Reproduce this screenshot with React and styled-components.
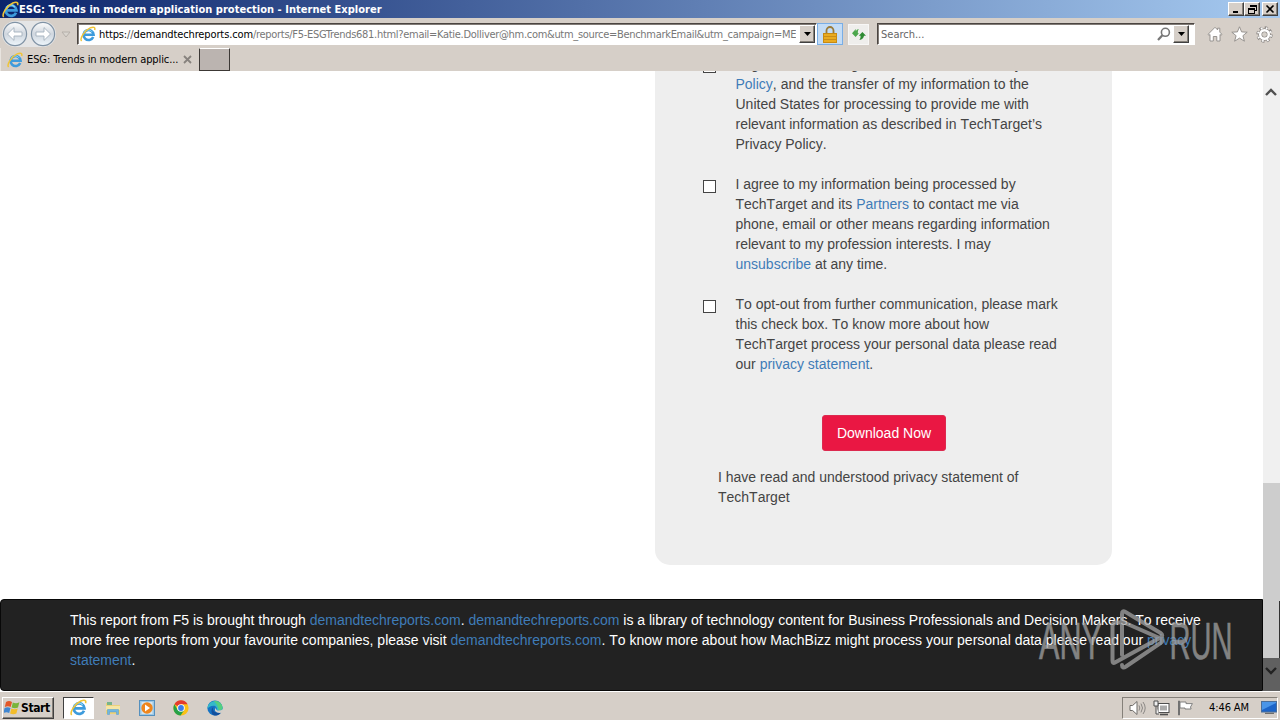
import React from 'react'
import styled, { createGlobalStyle } from 'styled-components'

function IeIcon({ size = 17 }) {
  return (
    <Svg width={size} height={size} viewBox="0 0 16 16">
      <path d="M13.2 11 A5 5 0 1 1 13.6 8.8 H4.8" fill="none" stroke="#3d9bdc" strokeWidth="2.6" />
      <path d="M12 5.8 A4.7 4.7 0 0 0 4 6.4" fill="none" stroke="#8fd8f7" strokeWidth="1" />
      <path d="M1.6 15 C-0.6 12.6 4.4 4.6 10.2 1.9 C13.6 0.4 15.6 1.2 14.6 4" fill="none" stroke="#f0c437" strokeWidth="1.5" />
    </Svg>
  )
}

function NavArrow({ flip }) {
  return (
    <Svg width="26" height="26" viewBox="0 0 26 26">
      <defs>
        <linearGradient id="orb" x1="0" y1="0" x2="0" y2="1">
          <stop offset="0" stopColor="#fdfdfd" />
          <stop offset="0.5" stopColor="#cfd6de" />
          <stop offset="1" stopColor="#eef6fb" />
        </linearGradient>
      </defs>
      <circle cx="13" cy="13" r="11.6" fill="url(#orb)" stroke="#8093a5" strokeWidth="1.2" />
      <path
        d="M5.5 13 L12 6.6 V11 H20 V15 H12 V19.4 Z"
        transform={flip ? 'translate(26 0) scale(-1 1)' : undefined}
        fill="#fff" stroke="#a4b1bd" strokeWidth="0.9"
      />
    </Svg>
  )
}

function App() {
  return (
    <Screen>
      <GlobalStyle />
      <TitleBar>
        <IeIcon />
        <Title>ESG: Trends in modern application protection - Internet Explorer</Title>
        <WindowButtons>
          <WinButton><svg width="12" height="10"><path d="M3 8h5" stroke="#000" strokeWidth="2" /></svg></WinButton>
          <WinButton>
            <svg width="12" height="10" shapeRendering="crispEdges">
              <path d="M4 1h6v5h-2M4 1v2M4 2h6M2 4h6v5h-6zM2 5h6" fill="none" stroke="#000" />
            </svg>
          </WinButton>
          <WinButton $gap><svg width="12" height="10"><path d="M2.5 1.5l7 7M9.5 1.5l-7 7" stroke="#000" strokeWidth="1.6" /></svg></WinButton>
        </WindowButtons>
      </TitleBar>

      <NavBar>
        <NavPair><NavArrow /><NavArrow flip /></NavPair>
        <HistoryArrow width="10" height="7"><path d="M1 1h8l-4 5z" fill="#d9d5cf" stroke="#b6b0aa" /></HistoryArrow>
        <AddressBox>
          <IeIcon size={16} />
          <Url><b>https:</b>//<b>demandtechreports.com</b><UrlRest>/reports/F5-ESGTrends681.html?email=Katie.Dolliver@hm.com&amp;utm_source=BenchmarkEmail&amp;utm_campaign=ME</UrlRest></Url>
          <DropButton><svg width="7" height="4"><path d="M0 0h7l-3.5 4z" /></svg></DropButton>
        </AddressBox>
        <LockButton>
          <svg width="14" height="17" viewBox="0 0 14 17">
            <path d="M3.5 8V4.5a3.5 3.5 0 0 1 7 0V8" fill="none" stroke="#9a7b3a" strokeWidth="1.8" />
            <rect x="0.5" y="7.5" width="13" height="9" fill="#e9ab20" stroke="#c78a12" />
            <path d="M1 10.5h12M1 13.5h12" stroke="#c98d18" />
          </svg>
        </LockButton>
        <RefreshButton>
          <svg width="14" height="13" viewBox="0 0 14 13">
            <path d="M0 5.2L3.8 1V3.2Q4.4 1.6 6.8 1Q5.6 2.4 5.8 5.2L7 5.2L3.6 9L0 5.2Z" fill="#4ba64b" />
            <path d="M14 7.8L10.4 4L6.8 7.8H8.6Q8.8 10.6 7.4 12Q11.6 11.4 12 7.8Z" fill="#2e8b33" />
          </svg>
        </RefreshButton>
        <SearchBox>
          <span>Search...</span>
          <svg width="14" height="14"><circle cx="8.4" cy="5.3" r="4" fill="none" stroke="#777" strokeWidth="1.6" /><path d="M5.4 8.2L1 13" stroke="#777" strokeWidth="2.2" /></svg>
          <DropButton><svg width="7" height="4"><path d="M0 0h7l-3.5 4z" /></svg></DropButton>
        </SearchBox>
        <Tools>
          <svg width="16" height="16" viewBox="0 0 16 16"><path d="M1 8.4L8 1.3l2.6 2.6V2.2h2.2v3.9L15 8.4l-1 .9-1-.8V15H9.8v-4.5H6.3V15H3V8.5l-1 .8z" fill="#fff" stroke="#8f8b88" strokeWidth=".9" /></svg>
          <svg width="17" height="16" viewBox="0 0 17 16"><path d="M8.5 .8l2.1 5.1 5.6.3-4.3 3.5 1.5 5.5-4.9-3.1-4.9 3.1 1.5-5.5L.8 6.2l5.6-.3z" fill="#fff" stroke="#8f8b88" strokeWidth=".9" /></svg>
          <svg width="17" height="17" viewBox="0 0 17 17">
            <circle cx="8.5" cy="8.5" r="6.7" fill="none" stroke="#8f8b88" strokeWidth="3" strokeDasharray="3 2.262" />
            <circle cx="8.5" cy="8.5" r="4.3" fill="none" stroke="#8f8b88" strokeWidth="4" />
            <circle cx="8.5" cy="8.5" r="6.5" fill="none" stroke="#fff" strokeWidth="2" strokeDasharray="1.6 3.505" strokeDashoffset="-.65" />
            <circle cx="8.5" cy="8.5" r="4.3" fill="none" stroke="#fff" strokeWidth="2.5" />
            <circle cx="8.5" cy="8.5" r="2" fill="#d4cfc8" />
          </svg>
        </Tools>
      </NavBar>

      <TabBar>
        <Tab>
          <IeIcon size={16} />
          <TabLabel>ESG: Trends in modern applic...</TabLabel>
          <svg width="9" height="9"><path d="M1 1l7 7M8 1l-7 7" stroke="#87827e" strokeWidth="1.8" /></svg>
        </Tab>
        <NewTab />
      </TabBar>

      <Viewport>
        <Page>
          <FormCard>
            <Consent>
              <Checkbox />
              <p>I agree to TechTarget’s Terms of Use, Privacy<br /><a>Policy</a>, and the transfer of my information to the<br />United States for processing to provide me with<br />relevant information as described in TechTarget’s<br />Privacy Policy.</p>
            </Consent>
            <Consent>
              <Checkbox />
              <p>I agree to my information being processed by<br />TechTarget and its <a>Partners</a> to contact me via<br />phone, email or other means regarding information<br />relevant to my profession interests. I may<br /><a>unsubscribe</a> at any time.</p>
            </Consent>
            <Consent>
              <Checkbox />
              <p>To opt-out from further communication, please mark<br />this check box. To know more about how<br />TechTarget process your personal data please read<br />our <a>privacy statement</a>.</p>
            </Consent>
            <DownloadButton>Download Now</DownloadButton>
            <Note>I have read and understood privacy statement of<br />TechTarget</Note>
          </FormCard>
          <Footer>
            This report from F5 is brought through <a>demandtechreports.com</a>. <a>demandtechreports.com</a> is a library of technology content for Business Professionals and Decision Makers. To receive<br />
            more free reports from your favourite companies, please visit <a>demandtechreports.com</a>. To know more about how MachBizz might process your personal data please read our <a>privacy</a><br />
            <a>statement</a>.
          </Footer>
        </Page>
        <Scrollbar>
          <ScrollUp><Svg width="12" height="8"><path d="M1 7l5-5 5 5" fill="none" stroke="#505050" strokeWidth="2.4" /></Svg></ScrollUp>
          <Thumb />
          <ScrollDown><Svg width="12" height="8"><path d="M1 1l5 5 5-5" fill="none" stroke="#222" strokeWidth="2.4" /></Svg></ScrollDown>
        </Scrollbar>
      </Viewport>

      <Taskbar>
        <StartButton>
          <svg width="16" height="15" viewBox="0 0 16 15">
            <path d="M2 2Q5 0 8 2L6.7 7Q4 5.4 .8 7Z" fill="#e2582a" />
            <path d="M8.8 2.4Q12 4 15.4 2.2L14 7.4Q11 9 7.6 7.4Z" fill="#79b53b" />
            <path d="M.6 8Q3.6 6.4 6.5 8L5.2 13Q2.4 11.4 -.6 13Z" fill="#3f86d1" />
            <path d="M7.4 8.4Q10.4 10 13.7 8.4L12.4 13.4Q9.4 15 6.1 13.4Z" fill="#f3bd2a" />
          </svg>
          Start
        </StartButton>
        <Running><IeIcon /></Running>
        <QuickLaunch>
          <svg width="16" height="16" viewBox="0 0 16 16">
            <path d="M1 3h5l1 2h8v9H1z" fill="#ecd27a" />
            <path d="M2 2h5v3H2z" fill="#78b48b" />
            <path d="M1 6h14v4H1z" fill="#f5e6a6" />
            <path d="M2.5 14.5V9.5h11v5h-2v-2.6h-7v2.6z" fill="#70b7e2" stroke="#5599c8" strokeWidth=".5" />
          </svg>
          <svg width="16" height="16" viewBox="0 0 16 16">
            <rect x=".5" y=".5" width="15" height="15" fill="#9cc8e6" stroke="#5590be" />
            <rect x="2.5" y="2" width="11" height="12" fill="#d6e5ee" />
            <circle cx="8" cy="8" r="5.7" fill="#ef861d" />
            <path d="M6 4.6l5 3.4-5 3.4z" fill="#fff" />
          </svg>
          <svg width="16" height="16" viewBox="0 0 16 16">
            <circle cx="8" cy="8" r="7.6" fill="#fbc116" />
            <path d="M8 8L1.4 4.2A7.6 7.6 0 0 1 14.6 4.2H8z" fill="#e33b2e" />
            <path d="M1.4 4.2A7.6 7.6 0 0 0 7.6 15.6L11.3 9.9 8 8 4.7 9.9z" fill="#26a148" />
            <circle cx="8" cy="8" r="3.8" fill="#fff" />
            <circle cx="8" cy="8" r="2.9" fill="#3b7de9" />
          </svg>
          <svg width="16" height="16" viewBox="0 0 16 16">
            <circle cx="8" cy="8" r="7.6" fill="#1673c4" />
            <path d="M.6 7A7.6 7.6 0 0 1 15.6 8C15.6 11 11 11.5 9.4 10 10.6 8 9 5.7 6.6 5.7 3.7 5.7 1.2 7 .4 9z" fill="#35b9c9" />
            <path d="M7 1Q14 0 15.6 7.4Q15.4 10 12 10.4L10 5z" fill="#55cf80" />
            <path d="M6.4 7C5 10 7 13.6 13.8 12.8 12 15.4 9.6 15.7 8 15.6 4 15 3.4 9.6 6.4 7z" fill="#124f9d" />
            <path d="M9 7.5C8 10.5 11.6 11.6 16 9.6V12.2Q11 14 8 11Q7.4 9 9 7.5z" fill="#d4cfc8" />
          </svg>
        </QuickLaunch>
        <Tray>
          <svg width="17" height="16" viewBox="0 0 17 16">
            <path d="M1 5.5h2.6L8 1.5v13L3.6 10.5H1z" fill="#fff" stroke="#6f6c69" />
            <path d="M10 5.4q1.6 2.6 0 5.2M12 3.6q3 4.4 0 8.8M14 2q4.4 6 0 12" fill="none" stroke="#8b8885" />
          </svg>
          <svg width="17" height="16" viewBox="0 0 17 16">
            <rect x="5" y="3.5" width="11" height="9" fill="#fff" stroke="#4f4f4f" />
            <rect x="7" y="5.5" width="7" height="5" fill="#aaa" />
            <path d="M7 14.5h8" stroke="#4f4f4f" strokeWidth="1.6" />
            <path d="M1 1v5h4V1zM3 6v8h3" fill="#eee" stroke="#4f4f4f" />
          </svg>
          <svg width="17" height="16" viewBox="0 0 17 16">
            <path d="M2 .8v14.4" stroke="#666" strokeWidth="1.8" />
            <path d="M3 2h6v1.6h6.4L13.5 7l.6 2H8V8H3z" fill="#fff" stroke="#777" strokeWidth=".9" />
          </svg>
          <Clock>4:46 AM</Clock>
          <svg width="16" height="13" viewBox="0 0 16 13">
            <rect x=".5" y=".5" width="15" height="10.5" fill="#1c64c8" stroke="#4a6e9a" />
            <path d="M1 9L15 2V1H1z" fill="#4a95e8" />
            <path d="M4 12.3h9" stroke="#555" />
          </svg>
        </Tray>
      </Taskbar>

      <Watermark width="200" height="72">
        <text x="3" y="55" textLength="63" lengthAdjust="spacingAndGlyphs">ANY</text>
        <path d="M86 51V10Q86 6 89.5 8L124.5 29Q128 31.5 124.5 33.5L79 58.5Q76.5 60 76.5 56.5V22Q76.5 18.5 80 18.5H86M88 18.5L124.5 34.5Q128 37 124.5 39L90 62.5Q86 65 86 61" />
        <text x="133.5" y="55" textLength="63" lengthAdjust="spacingAndGlyphs">RUN</text>
      </Watermark>
    </Screen>
  )
}

export default App

const GlobalStyle = createGlobalStyle`
  * {
    box-sizing: border-box;
  }
  body {
    margin: 0;
    overflow: hidden;
  }
  p {
    margin: 0;
  }
`
const Svg = styled.svg`
  display: block;
  flex: none;
`
const Screen = styled.div`
  width: 1280px;
  height: 720px;
  display: flex;
  flex-direction: column;
  background: #d6cfc8;
  font-family: "DejaVu Sans Condensed", "DejaVu Sans", sans-serif;
  font-stretch: condensed;
  font-size: 11px;
  white-space: nowrap;
  position: relative;
`
const TitleBar = styled.div`
  height: 18px;
  display: flex;
  align-items: center;
  padding-left: 2px;
  background: linear-gradient(90deg, #0b246b, #a6caf0);
`
const Title = styled.span`
  color: #fff;
  font-weight: bold;
  flex: 1;
  letter-spacing: 0.03px;
`
const WindowButtons = styled.div`
  display: flex;
  padding-right: 2px;
`
const WinButton = styled.div`
  width: 16px;
  height: 14px;
  margin-left: ${props => props.$gap ? '2px' : '0'};
  display: flex;
  align-items: center;
  justify-content: center;
  background: #d6cfc8;
  border: 1px solid;
  border-color: #fff #404040 #404040 #fff;
  box-shadow: inset -1px -1px #858079;
`
const NavBar = styled.div`
  height: 28px;
  display: flex;
  align-items: center;
  padding: 4px 7px 0 2px;
`
const NavPair = styled.div`
  display: flex;
  gap: 2px;
  border-radius: 13px;
  background: #e4e5e6;
`
const HistoryArrow = styled.svg`
  margin: 0 6px 0 5px;
`
const AddressBox = styled.div`
  width: 740px;
  height: 22px;
  display: flex;
  align-items: center;
  gap: 3px;
  padding: 0 1px 0 2px;
  background: #fff;
  border: 1px solid;
  border-color: #4b4541 #fff #fff #4b4541;
  box-shadow: inset 1px 1px #817b76;
`
const Url = styled.div`
  flex: 1;
  overflow: hidden;
  color: #555;
  letter-spacing: -0.12px;

  b {
    font-weight: normal;
    color: #000;
  }
`
const UrlRest = styled.span`
  color: #777;
  letter-spacing: -0.3px;
`
const DropButton = styled.div`
  width: 16px;
  height: 18px;
  flex: none;
  display: flex;
  align-items: center;
  justify-content: center;
  background: #d6cfc8;
  border: 1px solid;
  border-color: #fff #404040 #404040 #fff;
  box-shadow: inset -1px -1px #858079;
`
const LockButton = styled.div`
  width: 26px;
  height: 22px;
  margin-left: 0;
  display: flex;
  align-items: center;
  justify-content: center;
  background: #c4dcf5;
  border: 1px solid #79aee6;
`
const RefreshButton = styled.div`
  width: 21px;
  height: 21px;
  margin: 0 8px 0 5px;
  display: flex;
  align-items: center;
  justify-content: center;
  background: #efeeec;
  border: 1px solid #f8f7f6;
`
const SearchBox = styled.div`
  width: 318px;
  height: 22px;
  display: flex;
  align-items: center;
  gap: 2px;
  padding: 0 5px 0 3px;
  color: #666;
  background: #fff;
  border: 1px solid;
  border-color: #4b4541 #fff #fff #4b4541;
  box-shadow: inset 1px 1px #817b76;

  span {
    flex: 1;
  }
`
const Tools = styled.div`
  display: flex;
  align-items: center;
  gap: 8px;
  margin-left: auto;
`
const TabBar = styled.div`
  height: 25px;
  display: flex;
  align-items: center;
  padding-top: 2px;
`
const Tab = styled.div`
  width: 199px;
  height: 23px;
  display: flex;
  align-items: center;
  gap: 4px;
  padding: 0 7px 0 6px;
  border-left: 1px solid #e8e4df;
`
const TabLabel = styled.span`
  flex: 1;
  letter-spacing: -0.1px;
`
const NewTab = styled.div`
  width: 31px;
  height: 23px;
  background: #bbb4b0;
  border: 1px solid;
  border-color: #fff #3c3835 #3c3835 #3c3835;
`
const Viewport = styled.div`
  height: 620px;
  display: flex;
  overflow: hidden;
  background: #fff;
  font-family: "Liberation Sans", Arial, sans-serif;
  font-stretch: normal;
  font-size: 14px;
  font-kerning: none;
  line-height: 20px;

  a {
    color: #3f7cb8;
  }
`
const Page = styled.div`
  width: 1263px;
  display: flex;
  flex-direction: column;
`
const FormCard = styled.div`
  width: 457px;
  height: 511px;
  margin: -17px 0 0 655px;
  padding: 0 48px;
  display: flex;
  flex-direction: column;
  flex: none;
  color: #444;
  background: #eee;
  border-radius: 0 0 15px 15px;
`
const Consent = styled.div`
  display: flex;
  margin-bottom: 20px;
  gap: 19.5px;
`
const Checkbox = styled.span`
  width: 13px;
  height: 13px;
  flex: none;
  margin-top: 6px;
  background: #fff;
  border: 1px solid #444;
`
const DownloadButton = styled.div`
  width: 124px;
  height: 36px;
  margin: 21px 0 16px 119px;
  color: #fff;
  background: #ea1743;
  border: 1px solid #dc2a4f;
  border-radius: 3px;
  line-height: 35px;
  text-align: center;
`
const Note = styled.p`
  padding-left: 15px;
`
const Footer = styled.div`
  height: 92px;
  margin-top: 34px;
  padding: 10px 0 0 69px;
  color: #fff;
  background: #222;
  border: 1px solid #080808;
  border-radius: 4px 0 0 4px;
`
const Scrollbar = styled.div`
  width: 17px;
  display: flex;
  flex-direction: column;
  background: #f0f0f0;
`
const ScrollUp = styled.div`
  height: 412px;
  padding: 17px 0 0 2px;
`
const Thumb = styled.div`
  height: 175px;
  background: linear-gradient(#333, #333) right bottom / 1px 57px no-repeat #cdcdcd;
`
const ScrollDown = styled.div`
  flex: 1;
  padding: 9px 0 0 2px;
  background: #606060;
`
const Taskbar = styled.div`
  height: 29px;
  display: flex;
  align-items: center;
  padding: 3px 2px 0 2px;
  border-top: 1px solid #fff;
`
const StartButton = styled.div`
  width: 52px;
  height: 22px;
  display: flex;
  align-items: center;
  gap: 1px;
  padding-left: 1px;
  font-weight: bold;
  font-size: 12px;
  letter-spacing: -0.4px;
  border: 1px solid;
  border-color: #fff #404040 #404040 #fff;
  box-shadow: inset -1px -1px #858079;
`
const Running = styled.div`
  width: 31px;
  height: 22px;
  margin-left: 9px;
  display: flex;
  align-items: center;
  justify-content: center;
  background: #fff;
  border: 1px solid;
  border-color: #404040 #fff #fff #404040;
`
const QuickLaunch = styled.div`
  display: flex;
  gap: 18px;
  margin-left: 11px;
`
const Tray = styled.div`
  width: 156px;
  height: 22px;
  margin-left: auto;
  display: flex;
  align-items: center;
  gap: 7px;
  padding-left: 6px;
  border: 1px solid;
  border-color: #858079 #fff #fff #858079;
`
const Clock = styled.span`
  flex: 1;
  padding-left: 3px;
  text-align: center;
  letter-spacing: -0.1px;
`
// lies over the end of the footer text
const Watermark = styled.svg`
  position: absolute;
  left: 1036px;
  top: 604px;
  opacity: 0.75;

  text {
    font: 51px "Liberation Sans Narrow", "Liberation Sans", sans-serif;
    fill: #a2a2a2;
    stroke: #a2a2a2;
    stroke-width: 0.6px;
  }
  path {
    fill: none;
    stroke: #a2a2a2;
    stroke-width: 4px;
    stroke-linecap: round;
  }
`
